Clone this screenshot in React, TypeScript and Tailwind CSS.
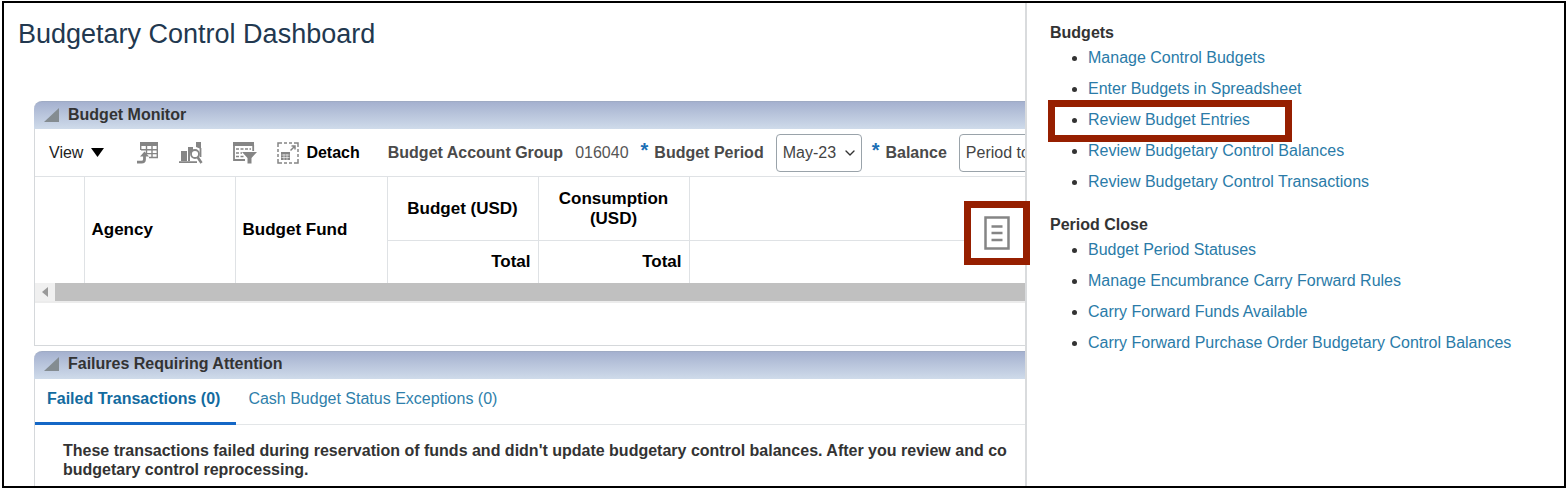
import { ReactNode, useState } from "react";
import { FiChevronDown } from "react-icons/fi";

const budgetLinks = [
  { label: "Manage Control Budgets" },
  { label: "Enter Budgets in Spreadsheet" },
  { label: "Review Budget Entries", highlighted: true },
  { label: "Review Budgetary Control Balances" },
  { label: "Review Budgetary Control Transactions" },
];

const periodLinks = [
  { label: "Budget Period Statuses" },
  { label: "Manage Encumbrance Carry Forward Rules" },
  { label: "Carry Forward Funds Available" },
  { label: "Carry Forward Purchase Order Budgetary Control Balances" },
];

const tabs = ["Failed Transactions (0)", "Cash Budget Status Exceptions (0)"];

function ExportIcon() {
  return (
    <svg width="22" height="22" viewBox="0 0 22 22" fill="none" stroke="#858585">
      <path d="M3 0h18v4H3z" fill="#858585" stroke="none" />
      <path d="M3.7 8V1.5h16.6v14H12M4 7.7h16.5M9 11.6h11.500M9.500 4v7M15 4v11.5" strokeWidth="1.4" />
      <path d="M0 20.200h4.500q3 0 3-3V13" strokeWidth="2.800" />
      <path d="M3 14.500 7.500 9.500l4.500 5z" fill="#858585" stroke="none" />
    </svg>
  );
}

function GraphIcon() {
  return (
    <svg width="24" height="22" viewBox="0 0 24 22" fill="none" stroke="#858585">
      <path d="M2 9h6v10H2zM9 5h5v3l-3 4v7H9zM17 0h5v7l-5-2z" fill="#858585" stroke="none" />
      <path d="M0 20.200h18M21.500 6v9" strokeWidth="1.800" />
      <circle cx="16" cy="12" r="4" strokeWidth="1.800" />
      <path d="m18.500 15 4 6" strokeWidth="2.600" />
    </svg>
  );
}

function FilterIcon() {
  return (
    <svg width="24" height="22" viewBox="0 0 24 22" fill="none" stroke="#858585">
      <path d="M0 0h21v4H0z" fill="#858585" stroke="none" />
      <path d="M1 3v15h11M20.200 3v6" strokeWidth="1.800" />
      <path d="M3 7h15M3 11h6M3 14.500h9" strokeWidth="1.500" strokeDasharray="3 1.5" />
      <path d="M9 10h15l-5.500 6v5.500h-4V16z" fill="#858585" stroke="none" />
    </svg>
  );
}

function DetachIcon() {
  return (
    <svg width="22" height="22" viewBox="0 0 22 22" fill="none" stroke="#858585">
      <path d="M1 5V1h4M17 1h4v4M21 17v4h-4M5 21H1v-4M7 1h3M12 1h3M7 21h3M12 21h3M1 7v3M1 12v3M21 7v3M21 12v3" strokeWidth="1.500" />
      <path d="M4 10h9v8H4z" fill="#858585" stroke="none" />
      <path d="M4.500 13h8M4.500 15.500h8M7 12v6M10 12v6" stroke="#fff" strokeWidth=".6" />
      <path d="m13.500 8.500 4-4M14.500 4H18v3.500" strokeWidth="1.500" />
    </svg>
  );
}

function Panel({ title, className, children }: { title: string; className?: string; children: ReactNode }) {
  return (
    <section className={className}>
      <h2 className="flex h-7 items-center gap-2 rounded-tl-lg border-t border-[#9fabc4] bg-linear-to-b from-[#a5b1cf] to-[#cfdbea] pb-0.5 pl-2.5 font-bold text-[#333]">
        <svg width="16" height="14" viewBox="0 0 16 14">
          <path d="M15 0v14H0z" fill="#848c91" />
        </svg>
        {title}
      </h2>
      {children}
    </section>
  );
}

function SelectBox({ id, options, className }: { id: string; options: string[]; className: string }) {
  return (
    <span className="relative flex shrink-0 items-center">
      <select id={id} className={`h-[38px] appearance-none rounded-sm border border-[#9aa3aa] bg-white pl-1.5 text-[#444] ${className}`}>
        {options.map((option) => (
          <option key={option}>{option}</option>
        ))}
      </select>
      <FiChevronDown className="pointer-events-none absolute right-1 size-4 text-[#333]" />
    </span>
  );
}

function LinkList({ title, links }: { title: string; links: { label: string; highlighted?: boolean }[] }) {
  return (
    <section>
      <h2 className="leading-[18px] font-bold text-[#333]">{title}</h2>
      <ul className="list-disc pl-[38px] leading-[31px]">
        {links.map((link) => (
          <li key={link.label} className="relative">
            {link.highlighted && (
              <span className="pointer-events-none absolute -top-1 -left-10 h-[42px] w-[244px] border-[7px] border-[#961f00]" />
            )}
            <a href="#" className="text-[#2a7ba8]">{link.label}</a>
          </li>
        ))}
      </ul>
    </section>
  );
}

export default function App() {
  const [activeTab, setActiveTab] = useState(tabs[0]);

  return (
    <div className="flex min-h-screen bg-white px-0.5 pt-px pb-0.5 font-['Liberation_Sans',Arial,sans-serif] text-base text-[#333]">
      <div className="flex min-w-0 flex-1 border-2 border-black">
        <main className="flex min-w-0 flex-1 flex-col overflow-hidden whitespace-nowrap">
          <h1 className="pt-[13px] pb-[49px] pl-3.5 text-[27px] leading-9 text-[#22384f]">Budgetary Control Dashboard</h1>

          <Panel title="Budget Monitor" className="ml-[30px]">
            <div className="border-b border-l border-[#d5d8db]">
              <div className="flex h-[47px] items-center">
                <button type="button" className="ml-3.5 flex items-center gap-2 text-[#222]">
                  View
                  <svg width="13" height="9" viewBox="0 0 13 9"><path d="M0 0h13L6.5 9z" fill="#000" /></svg>
                </button>
                <button type="button" aria-label="Export to Excel" className="ml-[33px]"><ExportIcon /></button>
                <button type="button" aria-label="View graph" className="ml-5"><GraphIcon /></button>
                <button type="button" aria-label="Query by example" className="ml-[30px]"><FilterIcon /></button>
                <button type="button" className="ml-5 flex items-center gap-[7px] font-bold text-black">
                  <DetachIcon />
                  Detach
                </button>
                <span className="ml-7 font-bold text-[#4a4a4a]">Budget Account Group</span>
                <span className="ml-3 text-[#555]">016040</span>
                <span className="ml-3 pb-1.5 text-xl font-bold text-[#1b6fb5]">*</span>
                <label htmlFor="period" className="mr-3 ml-1.5 font-bold text-[#4a4a4a]">Budget Period</label>
                <SelectBox id="period" options={["May-23", "Jun-23"]} className="w-[86px]" />
                <span className="ml-2.5 pb-1.5 text-xl font-bold text-[#1b6fb5]">*</span>
                <label htmlFor="balance" className="mr-3 ml-1.5 font-bold text-[#4a4a4a]">Balance</label>
                <SelectBox id="balance" options={["Period to date", "Year to date"]} className="w-[140px]" />
              </div>

              <table className="w-full table-fixed border-collapse text-[17px] leading-5 text-black">
                <colgroup>
                  <col className="w-[49px]" />
                  <col className="w-[151px]" />
                  <col className="w-[152px]" />
                  <col className="w-[151px]" />
                  <col className="w-[151px]" />
                  <col />
                </colgroup>
                <thead>
                  <tr className="h-16 border-t border-[#dfe2e5]">
                    <td rowSpan={2} className="border-r border-[#dfe2e5]" />
                    <th rowSpan={2} className="border-r border-[#dfe2e5] px-[7px] text-left">Agency</th>
                    <th rowSpan={2} className="border-r border-[#dfe2e5] px-[7px] text-left">Budget Fund</th>
                    <th className="border-r border-b border-[#dfe2e5]">Budget (USD)</th>
                    <th className="border-r border-b border-[#dfe2e5] whitespace-normal">Consumption (USD)</th>
                    <td className="border-b border-[#dfe2e5]" />
                  </tr>
                  <tr className="h-[42px]">
                    <th className="border-r border-[#dfe2e5] px-[7px] text-right">Total</th>
                    <th className="border-r border-[#dfe2e5] px-[7px] text-right">Total</th>
                    <td />
                  </tr>
                </thead>
              </table>

              <div className="mb-[42px] flex h-5 border-b-2 border-[#ececec] bg-[#c0c0c0]">
                <button type="button" aria-label="Scroll left" className="flex w-5 items-center justify-center bg-[#f0f0f0]">
                  <svg width="6" height="10" viewBox="0 0 6 10"><path d="M6 0v10L0 5z" fill="#999" /></svg>
                </button>
              </div>
            </div>
          </Panel>

          <Panel title="Failures Requiring Attention" className="mt-[5px] ml-[30px] flex flex-1 flex-col">
            <div className="flex-1 border-l border-[#d5d8db]">
              <div role="tablist" className="flex h-[46px] border-b border-[#e3e6e8]">
                {tabs.map((tab) => (
                  <button
                    key={tab}
                    type="button"
                    role="tab"
                    aria-selected={tab === activeTab}
                    onClick={() => setActiveTab(tab)}
                    className={
                      tab === activeTab
                        ? "-mb-px border-b-[3px] border-[#1467c6] pr-4 pb-0.5 pl-3 font-bold text-[#136b9f]"
                        : "pr-4 pb-1 pl-3 text-[#2f7fab]"
                    }
                  >
                    {tab}
                  </button>
                ))}
              </div>
              <p className="pt-4 pl-7 leading-[19px] font-bold">
                These transactions failed during reservation of funds and didn't update budgetary control balances. After you review and co
                <br />
                budgetary control reprocessing.
              </p>
            </div>
          </Panel>
        </main>

        <aside className="relative w-[539px] shrink-0 border-l-2 border-[#d9dbdd] pt-[21px] pl-[23px]">
          <button
            type="button"
            aria-label="Tasks"
            className="absolute top-[198px] -left-[63px] flex h-16 w-[66px] items-center justify-center border-[7px] border-[#961f00] bg-white"
          >
            <svg width="26" height="34" viewBox="0 0 26 34" fill="none" stroke="#858585" strokeWidth="2.5">
              <path d="M1.5 1.5h23v31h-23zM7.500 10.500h11M7.500 17h11M7.500 24h11" />
            </svg>
          </button>
          <nav className="flex flex-col gap-[19px]">
            <LinkList title="Budgets" links={budgetLinks} />
            <LinkList title="Period Close" links={periodLinks} />
          </nav>
        </aside>
      </div>
    </div>
  );
}
